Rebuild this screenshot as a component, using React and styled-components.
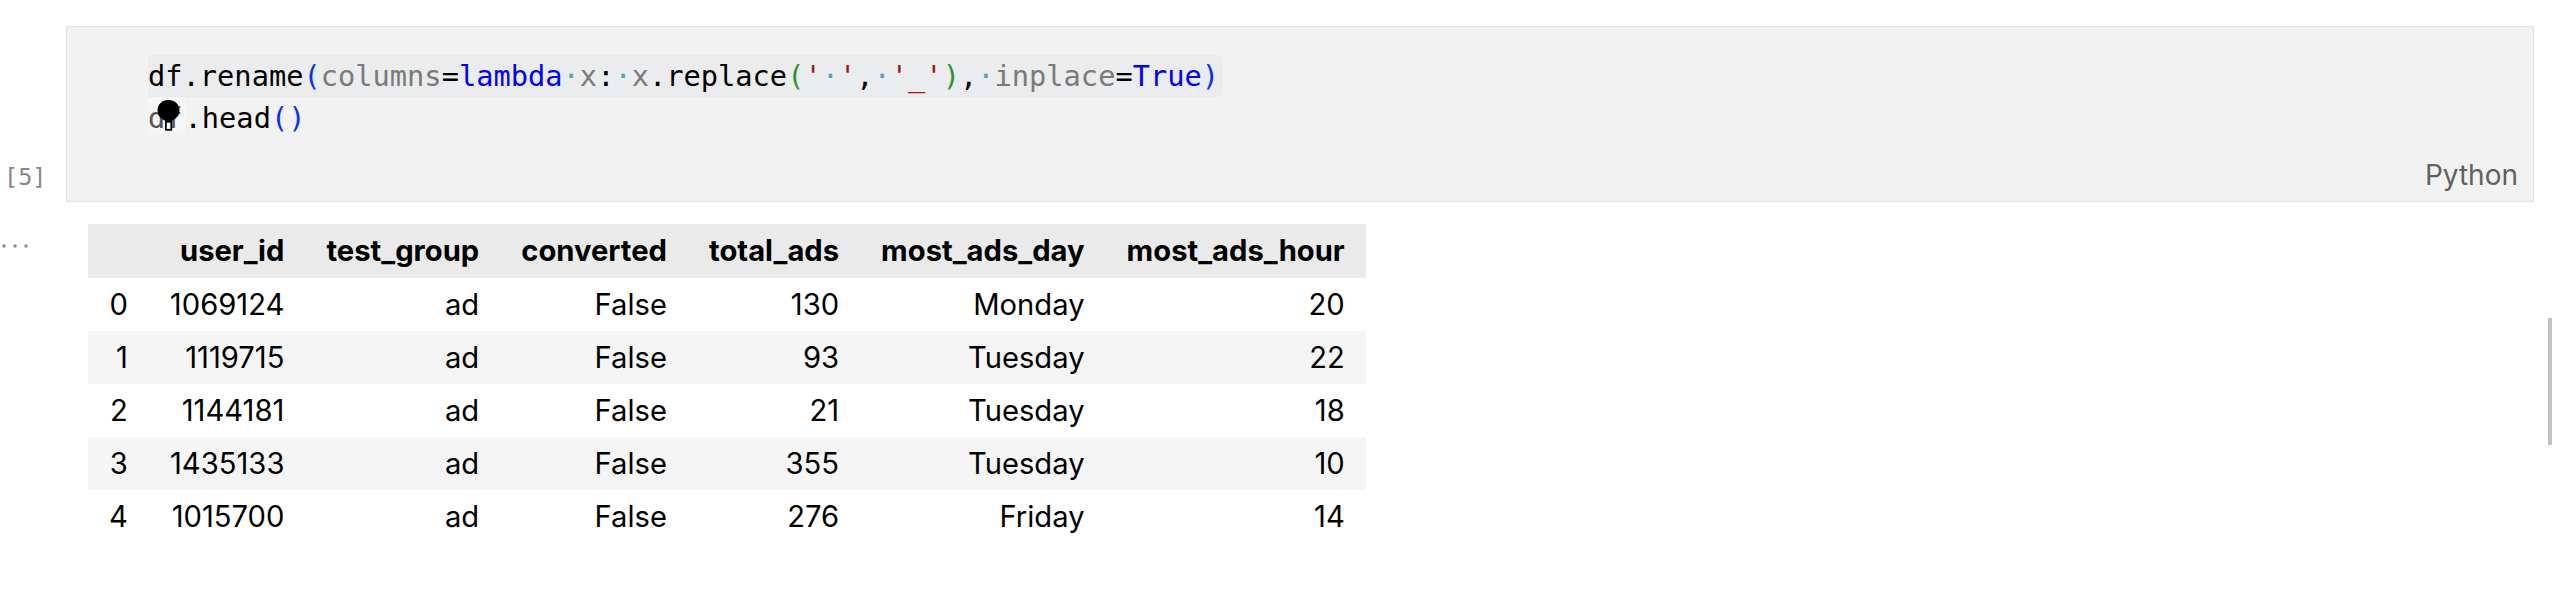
import React from "react";
import styled, { createGlobalStyle } from "styled-components";

const GlobalStyle = createGlobalStyle`
  body {
    margin: 0;
    background: #fff;
  }
`;

const rows = [
  { idx: 0, id: 1069124, group: "ad", conv: "False", ads: 130, day: "Monday", hour: 20 },
  { idx: 1, id: 1119715, group: "ad", conv: "False", ads: 93, day: "Tuesday", hour: 22 },
  { idx: 2, id: 1144181, group: "ad", conv: "False", ads: 21, day: "Tuesday", hour: 18 },
  { idx: 3, id: 1435133, group: "ad", conv: "False", ads: 355, day: "Tuesday", hour: 10 },
  { idx: 4, id: 1015700, group: "ad", conv: "False", ads: 276, day: "Friday", hour: 14 },
];

const columns = ["user_id", "test_group", "converted", "total_ads", "most_ads_day", "most_ads_hour"];

const Bulb = () => (
  <svg width="23" height="32" viewBox="0 0 23 32">
    <path d="M11.5 0C5 0 0.5 4.6 0.5 10.6c0 3.6 1.7 6.3 4.2 8.2 1.6 1.2 3.3 1.6 3.3 2.2v0.8h7v-0.8c0-0.6 1.7-1 3.3-2.2 2.5-1.9 4.2-4.6 4.2-8.2C22.5 4.6 18 0 11.5 0z" fill="#000" />
    <rect x="8.9" y="21.8" width="5.4" height="8" fill="#fff" stroke="#000" strokeWidth="1.8" />
  </svg>
);

const Dots = () => (
  <svg width="30" height="6" viewBox="0 0 30 6">
    <circle cx="4" cy="3" r="1.7" fill="#8a8a8a" />
    <circle cx="15" cy="3" r="1.7" fill="#8a8a8a" />
    <circle cx="26" cy="3" r="1.7" fill="#8a8a8a" />
  </svg>
);

const App = () => {
  return (
    <Page>
      <GlobalStyle />
      <CellRow>
        <Gutter>
          <ExecCount>[5]</ExecCount>
        </Gutter>
        <Editor>
          <Code>
            <Line highlighted>
              <T>df.rename</T>
              <B>(</B>
              <P>columns</P>
              <T>=</T>
              <K>lambda</K>
              <W>·</W>
              <P>x</P>
              <T>:</T>
              <W>·</W>
              <P>x</P>
              <T>.replace</T>
              <G>(</G>
              <S>'</S>
              <W>·</W>
              <S>'</S>
              <T>,</T>
              <W>·</W>
              <S>'_'</S>
              <G>)</G>
              <T>,</T>
              <W>·</W>
              <P>inplace</P>
              <T>=</T>
              <K>True</K>
              <B>)</B>
            </Line>
            <Line>
              <Hover>
                df
                <BulbSpot>
                  <Bulb />
                </BulbSpot>
              </Hover>
              <T>.head</T>
              <B>()</B>
            </Line>
          </Code>
          <Footer>
            <Lang>Python</Lang>
          </Footer>
        </Editor>
      </CellRow>
      <OutputRow>
        <OutGutter>
          <Dots />
        </OutGutter>
        <Output>
          <Frame>
            <thead>
              <tr>
                <Th />
                {columns.map((c) => (
                  <Th key={c}>{c}</Th>
                ))}
              </tr>
            </thead>
            <tbody>
              {rows.map((r) => (
                <Tr key={r.idx} striped={r.idx % 2 === 1}>
                  <Td>{r.idx}</Td>
                  <Td>{r.id}</Td>
                  <Td>{r.group}</Td>
                  <Td>{r.conv}</Td>
                  <Td>{r.ads}</Td>
                  <Td>{r.day}</Td>
                  <Td>{r.hour}</Td>
                </Tr>
              ))}
            </tbody>
          </Frame>
        </Output>
      </OutputRow>
      <ScrollThumb />
    </Page>
  );
};

const Page = styled.div`
  padding: 26px 18px 0 0;
  min-height: 580px;
`;

const CellRow = styled.div`
  display: grid;
  grid-template-columns: 66px 1fr;
`;

const Gutter = styled.div`
  display: flex;
  flex-direction: column;
  justify-content: flex-end;
  padding: 0 0 12px 4px;
`;

const ExecCount = styled.div`
  font-family: "DejaVu Sans Mono", monospace;
  font-size: 23.5px;
  line-height: 26px;
  color: #888;
`;

const Editor = styled.div`
  border: 1px solid #e5e5e5;
  background: #f2f2f2;
  padding: 28px 15px 10px 81px;
`;

const Code = styled.div`
  font-family: "DejaVu Sans Mono", monospace;
  font-size: 28.7px;
  line-height: 42px;
  color: #000;
  white-space: pre;
`;

const Line = styled.div`
  width: fit-content;
  height: 42px;
  padding-right: 4px;
  border-radius: 0 6px 6px 0;
  background: ${(p) => (p.highlighted ? "#ebecee" : "transparent")};
`;

const T = styled.span`
  color: #000;
`;
const B = styled.span`
  color: #0431fa;
`;
const G = styled.span`
  color: #319331;
`;
const K = styled.span`
  color: #0000ff;
`;
const P = styled.span`
  color: #7a7a7a;
`;
const S = styled.span`
  color: #a31515;
`;
const W = styled.span`
  color: #5a9fb6;
`;

const Hover = styled.span`
  position: relative;
  display: inline-block;
  height: 38px;
  background: #f6f6f6;
  color: #555;
  padding-right: 2px;
`;

const BulbSpot = styled.span`
  position: absolute;
  left: 9px;
  top: 3px;
  line-height: 0;
`;

const Footer = styled.div`
  display: flex;
  justify-content: flex-end;
  margin-top: 20px;
`;

const Lang = styled.div`
  font-family: Inter, "Noto Sans", sans-serif;
  font-size: 28px;
  line-height: 32px;
  color: #616161;
`;

const OutputRow = styled.div`
  display: grid;
  grid-template-columns: 66px 1fr;
  padding-top: 22px;
`;

const OutGutter = styled.div`
  padding: 19px 0 0 0;
  line-height: 0;
`;

const Output = styled.div`
  padding-left: 22px;
`;

const Frame = styled.table`
  border-collapse: collapse;
  border-spacing: 0;
  font-family: Inter, "Noto Sans", sans-serif;
  font-size: 29.2px;
  color: #000;
`;

const Th = styled.th`
  background: #eaeaea;
  font-weight: 700;
  text-align: right;
  padding: 10px 21px;
  line-height: 34px;
`;

const Tr = styled.tr`
  background: ${(p) => (p.striped ? "#f5f5f5" : "#fff")};
`;

const Td = styled.td`
  text-align: right;
  padding: 10px 21px;
  line-height: 33px;
`;

const ScrollThumb = styled.div`
  position: fixed;
  right: 0;
  top: 318px;
  width: 4px;
  height: 127px;
  background: #c1c1c1;
`;

export default App;
